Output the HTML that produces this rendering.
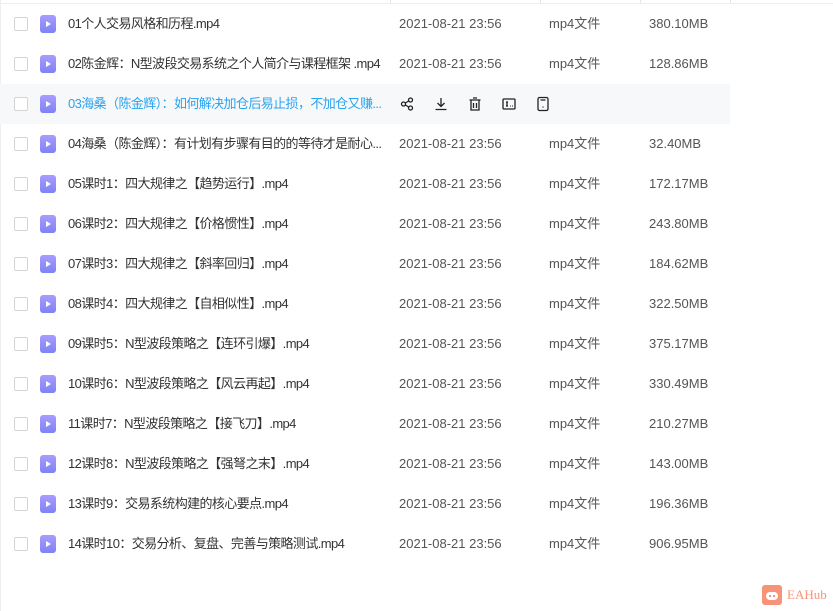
<!DOCTYPE html>
<html><head><meta charset="utf-8"><style>
body{margin:0;width:833px;height:611px;background:#fff;font-family:"Liberation Sans","Noto Sans CJK SC",sans-serif;font-size:13px;position:relative;overflow:hidden}
.top{position:absolute;top:0;left:0;width:833px;height:3px;border-bottom:1px solid #eee}
.sep{position:absolute;top:0;height:3px;width:1px;background:#e6e6e6}
.row{position:absolute;left:0;width:730px;height:40px;line-height:40px}
.row.h{background:#f7f8fa}
.cb{position:absolute;left:14px;top:13px;width:12px;height:12px;border:1px solid #d5d5d5;border-radius:2px;background:#fff}
.ic{position:absolute;left:40px;top:11px;width:16px;height:18px;border-radius:3px;background:linear-gradient(#a99cff,#7d83f5)}
.ic:after{content:"";position:absolute;left:6px;top:6px;border-left:5px solid #fff;border-top:3px solid transparent;border-bottom:3px solid transparent}
.n{position:absolute;left:68px;top:0;color:#333;white-space:nowrap;letter-spacing:-0.6px}
.h .n{color:#2aa3f0}
.d{position:absolute;left:399px;top:0;color:#555}
.t{position:absolute;left:549px;top:0;color:#555}
.s{position:absolute;left:649px;top:0;color:#555}
.acts{position:absolute;left:400px;top:12px;display:flex;gap:20px;line-height:0}
.acts svg{width:14px;height:16px}
</style></head><body>
<div class="top"></div>
<div class="sep" style="left:390px"></div><div class="sep" style="left:540px"></div><div class="sep" style="left:640px"></div><div class="sep" style="left:730px"></div>
<div style="position:absolute;left:0;top:0;width:1px;height:611px;background:#eee"></div>

<div class="row" style="top:4px"><div class="cb"></div><div class="ic"></div><div class="n">01个人交易风格和历程.mp4</div><div class="d">2021-08-21 23:56</div><div class="t">mp4文件</div><div class="s">380.10MB</div></div>
<div class="row" style="top:44px"><div class="cb"></div><div class="ic"></div><div class="n">02陈金辉：N型波段交易系统之个人简介与课程框架 .mp4</div><div class="d">2021-08-21 23:56</div><div class="t">mp4文件</div><div class="s">128.86MB</div></div>
<div class="row h" style="top:84px"><div class="cb"></div><div class="ic"></div><div class="n">03海桑（陈金辉）：如何解决加仓后易止损，不加仓又赚...</div>
<div class="acts">
<svg viewBox="0 0 14 16" fill="none" stroke="#222" stroke-width="1.3"><circle cx="3.5" cy="8" r="2"/><circle cx="10.5" cy="4" r="2"/><circle cx="10.5" cy="12" r="2"/><path d="M5.3 7 8.7 5M5.3 9 8.7 11"/></svg>
<svg viewBox="0 0 14 16" fill="none" stroke="#222" stroke-width="1.3"><path d="M7 2v8M3.5 7 7 10.5 10.5 7M1.5 13.5h11"/></svg>
<svg viewBox="0 0 14 16" fill="none" stroke="#222" stroke-width="1.3"><path d="M1.5 4h11M5 2h4M3 4v10h8V4M5.5 7v5M8.5 7v5"/></svg>
<svg viewBox="0 0 14 16" fill="none" stroke="#222" stroke-width="1.3"><rect x="1" y="3" width="12" height="10" rx="1"/><path d="M4 6h2M5 6v4M4 10h2"/><path d="M8 10h.8M10 10h.8"/></svg>
<svg viewBox="0 0 14 16" fill="none" stroke="#222" stroke-width="1.3"><rect x="2" y="1.5" width="10" height="13" rx="1.5"/><path d="M4.5 4h5M7 10.5v1"/></svg>
</div></div>
<div class="row" style="top:124px"><div class="cb"></div><div class="ic"></div><div class="n">04海桑（陈金辉）：有计划有步骤有目的的等待才是耐心...</div><div class="d">2021-08-21 23:56</div><div class="t">mp4文件</div><div class="s">32.40MB</div></div>
<div class="row" style="top:164px"><div class="cb"></div><div class="ic"></div><div class="n">05课时1：四大规律之【趋势运行】.mp4</div><div class="d">2021-08-21 23:56</div><div class="t">mp4文件</div><div class="s">172.17MB</div></div>
<div class="row" style="top:204px"><div class="cb"></div><div class="ic"></div><div class="n">06课时2：四大规律之【价格惯性】.mp4</div><div class="d">2021-08-21 23:56</div><div class="t">mp4文件</div><div class="s">243.80MB</div></div>
<div class="row" style="top:244px"><div class="cb"></div><div class="ic"></div><div class="n">07课时3：四大规律之【斜率回归】.mp4</div><div class="d">2021-08-21 23:56</div><div class="t">mp4文件</div><div class="s">184.62MB</div></div>
<div class="row" style="top:284px"><div class="cb"></div><div class="ic"></div><div class="n">08课时4：四大规律之【自相似性】.mp4</div><div class="d">2021-08-21 23:56</div><div class="t">mp4文件</div><div class="s">322.50MB</div></div>
<div class="row" style="top:324px"><div class="cb"></div><div class="ic"></div><div class="n">09课时5：N型波段策略之【连环引爆】.mp4</div><div class="d">2021-08-21 23:56</div><div class="t">mp4文件</div><div class="s">375.17MB</div></div>
<div class="row" style="top:364px"><div class="cb"></div><div class="ic"></div><div class="n">10课时6：N型波段策略之【风云再起】.mp4</div><div class="d">2021-08-21 23:56</div><div class="t">mp4文件</div><div class="s">330.49MB</div></div>
<div class="row" style="top:404px"><div class="cb"></div><div class="ic"></div><div class="n">11课时7：N型波段策略之【接飞刀】.mp4</div><div class="d">2021-08-21 23:56</div><div class="t">mp4文件</div><div class="s">210.27MB</div></div>
<div class="row" style="top:444px"><div class="cb"></div><div class="ic"></div><div class="n">12课时8：N型波段策略之【强弩之末】.mp4</div><div class="d">2021-08-21 23:56</div><div class="t">mp4文件</div><div class="s">143.00MB</div></div>
<div class="row" style="top:484px"><div class="cb"></div><div class="ic"></div><div class="n">13课时9：交易系统构建的核心要点.mp4</div><div class="d">2021-08-21 23:56</div><div class="t">mp4文件</div><div class="s">196.36MB</div></div>
<div class="row" style="top:524px"><div class="cb"></div><div class="ic"></div><div class="n">14课时10：交易分析、复盘、完善与策略测试.mp4</div><div class="d">2021-08-21 23:56</div><div class="t">mp4文件</div><div class="s">906.95MB</div></div>

<div style="position:absolute;left:762px;top:585px;width:20px;height:20px;border-radius:3px;background:#f8937a">
<div style="position:absolute;left:4px;top:7px;width:12px;height:8px;border-radius:4px;background:#fff"></div>
<div style="position:absolute;left:7px;top:10px;width:2px;height:2px;background:#f8937a"></div>
<div style="position:absolute;left:11px;top:10px;width:2px;height:2px;background:#f8937a"></div>
</div>
<div style="position:absolute;left:787px;top:587px;font-family:'Liberation Serif',serif;font-size:13px;color:#f8937a">EAHub</div>
</body></html>
